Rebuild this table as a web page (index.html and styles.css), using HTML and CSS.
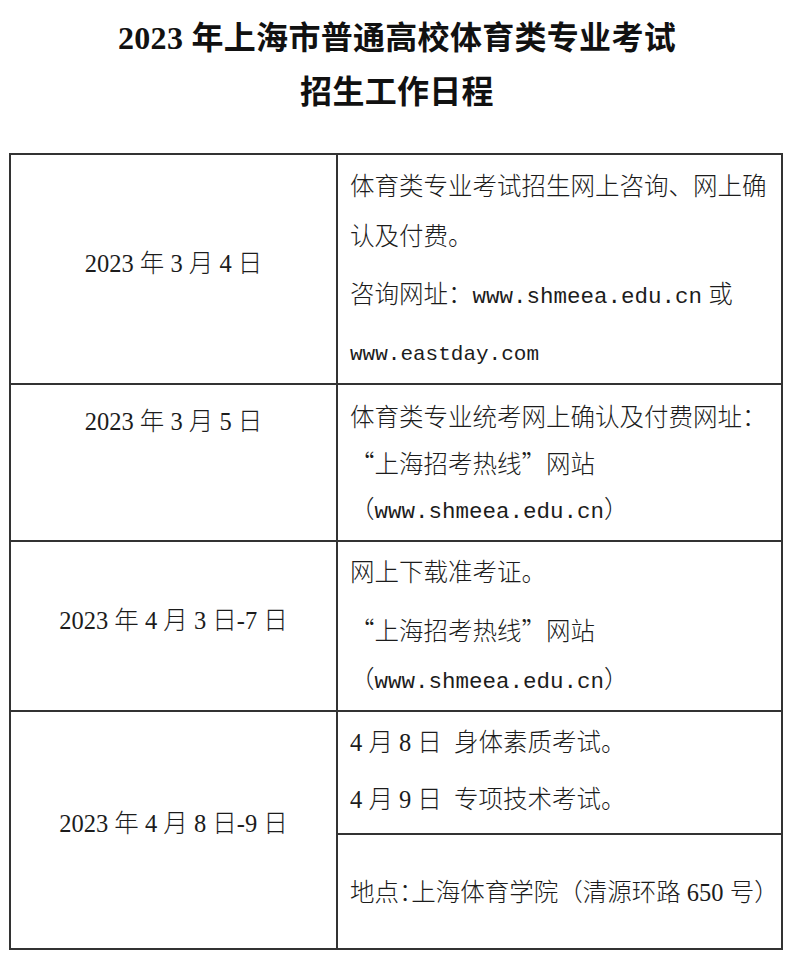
FILE: index.html
```html
<!DOCTYPE html>
<html lang="zh-CN">
<head>
<meta charset="utf-8">
<title>2023年上海市普通高校体育类专业考试招生工作日程</title>
<link rel="stylesheet" href="styles.css">
</head>
<body>
<h1 class="title">2023 年上海市普通高校体育类专业考试<br>招生工作日程</h1>
<div class="schedule">
  <div class="cell date date-1">2023 年 3 月 4 日</div>
  <div class="cell info info-1">
    <p class="p1">体育类专业考试招生网上咨询、网上确<br>认及付费。</p>
    <p class="p2">咨询网址：<span class="url">www.shmeea.edu.cn</span> 或</p>
    <p class="p3"><span class="url url-sm">www.eastday.com</span></p>
  </div>

  <div class="cell date date-2">2023 年 3 月 5 日</div>
  <div class="cell info info-2">
    <p>体育类专业统考网上确认及付费网址：</p>
    <p><span class="cjk">“</span>上海招考热线<span class="cjk">”</span>网站</p>
    <p>（<span class="url">www.shmeea.edu.cn</span>）</p>
  </div>

  <div class="cell date date-3">2023 年 4 月 3 日-7 日</div>
  <div class="cell info info-3">
    <p class="first">网上下载准考证。</p>
    <p class="next"><span class="cjk">“</span>上海招考热线<span class="cjk">”</span>网站</p>
    <p class="last">（<span class="url">www.shmeea.edu.cn</span>）</p>
  </div>

  <div class="cell date date-4">2023 年 4 月 8 日-9 日</div>
  <div class="cell info info-4a">
    <p>4 月 8 日&nbsp;&nbsp;身体素质考试。</p>
    <p class="second">4 月 9 日&nbsp;&nbsp;专项技术考试。</p>
  </div>
  <div class="cell info info-4b">
    <p>地点<span class="half">：</span>上海体育学院（清源环路 650 号）</p>
  </div>
</div>
</body>
</html>
```
FILE: styles.css
```css
html, body {
  margin: 0;
  padding: 0;
  background: #ffffff;
}

body {
  width: 794px;
  color: #1c1c1c;
  font-family: "Liberation Serif", "Noto Sans CJK SC", serif;
}

.title {
  margin: 0 0 34px 0;
  padding-top: 11px;
  text-align: center;
  font-family: "Liberation Serif", "Noto Sans CJK SC", serif;
  font-weight: 700;
  font-size: 32px;
  line-height: 54px;
  letter-spacing: 0.3px;
  color: #111111;
}

.schedule {
  margin-left: 9px;
  width: 774px;
  box-sizing: border-box;
  display: grid;
  grid-template-columns: 327px 445px;
  grid-template-rows: 230px 157px 170px 123px 115px;
  border-top: 2px solid #333333;
  border-left: 2px solid #333333;
}

.cell {
  box-sizing: border-box;
  border-right: 2px solid #333333;
  border-bottom: 2px solid #333333;
  font-size: 24.5px;
  font-weight: 300;
}

.cell p {
  margin: 0;
  white-space: nowrap;
}

.date {
  display: flex;
  justify-content: center;
  align-items: center;
  line-height: 45px;
}

.date-1 { padding-bottom: 12px; }
.date-2 { align-items: flex-start; padding-top: 14px; }
.date-3 { padding-bottom: 12px; }
.date-4 {
  grid-row: 4 / span 2;
  padding-bottom: 14px;
}

.info {
  padding-left: 12px;
}

.url {
  font-family: "Liberation Mono", monospace;
  font-size: 22.5px;
  font-weight: 400;
}

.url-sm {
  font-size: 21px;
}

.cjk {
  font-family: "Noto Sans CJK SC", sans-serif;
}

.half {
  font-family: "Noto Sans CJK SC", sans-serif;
  font-feature-settings: "halt" 1;
}

.info-1 { padding-top: 7px; }
.info-1 .p1 { line-height: 50px; }
.info-1 .p2 { line-height: 50px; margin-top: 8px; }
.info-1 .p3 { line-height: 50px; margin-top: 5px; }

.info-2 {
  padding-top: 10px;
  line-height: 45px;
}

.info-3 { padding-top: 6px; }
.info-3 .first { line-height: 50px; }
.info-3 .next { line-height: 48px; margin-top: 8px; }
.info-3 .last { line-height: 48px; }

.info-4a {
  padding-top: 6px;
  line-height: 50px;
}
.info-4a .second { margin-top: 7px; }

.info-4b {
  display: flex;
  align-items: center;
  line-height: 45px;
}
```
